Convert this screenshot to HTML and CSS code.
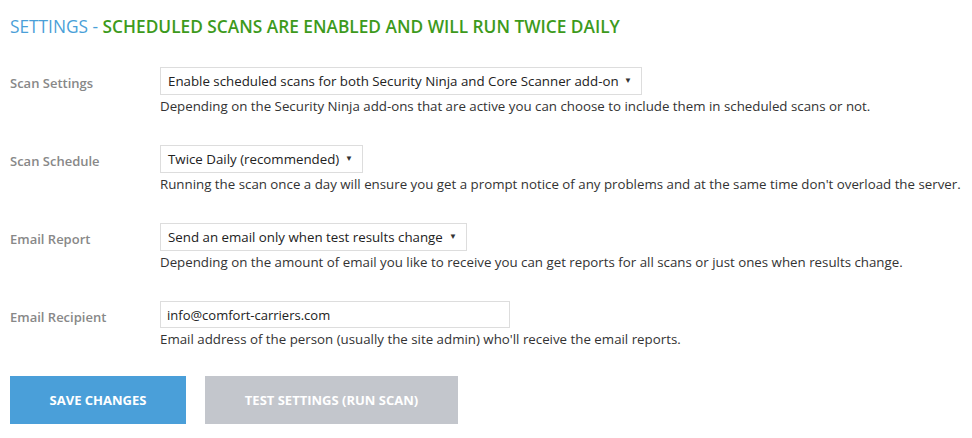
FILE: index.html
```html
<!DOCTYPE html>
<html lang="en">
  <head>
    <meta charset="UTF-8" />
    <meta name="viewport" content="width=device-width, initial-scale=1.0" />
    <link rel="stylesheet" href="styles.css">
  </head>
  <body>
    <div class="wrap">
      <h2 class="title">
        <span class="title-lead">Settings -</span>
        <span class="title-status">Scheduled scans are enabled and will run twice daily</span>
      </h2>

      <div class="form">
        <div class="row">
          <label class="label">Scan Settings</label>
          <div class="field">
            <div class="select select-wide">
              <span>Enable scheduled scans for both Security Ninja and Core Scanner add-on</span>
              <span class="caret">&#9660;</span>
            </div>
            <p class="desc">Depending on the Security Ninja add-ons that are active you can choose to include them in scheduled scans or not.</p>
          </div>
        </div>

        <div class="row">
          <label class="label">Scan Schedule</label>
          <div class="field">
            <div class="select select-schedule">
              <span>Twice Daily (recommended)</span>
              <span class="caret">&#9660;</span>
            </div>
            <p class="desc">Running the scan once a day will ensure you get a prompt notice of any problems and at the same time don't overload the server.</p>
          </div>
        </div>

        <div class="row">
          <label class="label">Email Report</label>
          <div class="field">
            <div class="select select-report">
              <span>Send an email only when test results change</span>
              <span class="caret">&#9660;</span>
            </div>
            <p class="desc">Depending on the amount of email you like to receive you can get reports for all scans or just ones when results change.</p>
          </div>
        </div>

        <div class="row">
          <label class="label">Email Recipient</label>
          <div class="field">
            <input type="text" class="text-input" value="info@comfort-carriers.com" />
            <p class="desc">Email address of the person (usually the site admin) who'll receive the email reports.</p>
          </div>
        </div>
      </div>

      <div class="buttons">
        <button class="btn btn-save">Save Changes</button>
        <button class="btn btn-test">Test Settings (Run Scan)</button>
      </div>
    </div>
  </body>
</html>
```

FILE: styles.css
```css
body {
  margin: 0;
  padding: 0;
  background-color: #fff;
  font-family: "Open Sans", "Noto Sans", sans-serif;
  font-size: 13px;
  color: #333;
}

.wrap {
  padding: 15px 9px 0 10px;
}

.title {
  margin: 0;
  font-size: 17.3px;
  font-weight: 600;
  text-transform: uppercase;
  line-height: 24px;
}

.title-lead {
  color: #4a9fd8;
  font-weight: 400;
}

.title-status {
  color: #3d9a1c;
}

.form {
  margin-top: 28px;
}

.row {
  display: flex;
  height: 78px;
}

.label {
  width: 150px;
  padding-top: 7px;
  color: #888;
  font-weight: 600;
}

.field {
  display: flex;
  flex-direction: column;
  align-items: flex-start;
  font-size: 13.3px;
}

.select {
  display: flex;
  justify-content: space-between;
  align-items: center;
  box-sizing: border-box;
  height: 28px;
  padding: 0 9px 0 7px;
  border: 1px solid #ddd;
  background-color: #fff;
  color: #222;
  white-space: nowrap;
}

.select-wide { width: 482px; }
.select-schedule { width: 203px; }
.select-report { width: 307px; }

.caret {
  font-size: 8px;
  color: #333;
  margin-bottom: 3px;
}

.text-input {
  box-sizing: border-box;
  width: 350px;
  height: 27px;
  padding: 0 6px;
  border: 1px solid #ddd;
  font-family: inherit;
  font-size: 13px;
  color: #222;
  outline: none;
}

.desc {
  margin: 2px 0 0 0;
  line-height: 18px;
  color: #333;
  white-space: nowrap;
}

.buttons {
  display: flex;
  gap: 19px;
  margin-top: -3px;
}

.btn {
  height: 48px;
  border: none;
  color: #fff;
  font-family: inherit;
  font-size: 13px;
  font-weight: 700;
  text-transform: uppercase;
  cursor: pointer;
}

.btn-save {
  width: 176px;
  background-color: #4a9fd9;
}

.btn-test {
  width: 253px;
  background-color: #c3c6cc;
}
```
